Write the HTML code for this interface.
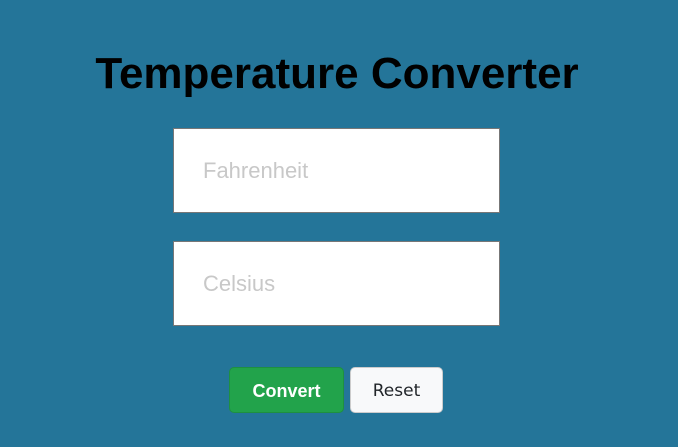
<!DOCTYPE html>
<html><head><style>
body{margin:0;width:678px;height:447px;background:#247599;font-family:"Liberation Sans",sans-serif;position:relative;overflow:hidden}
h1{position:absolute;left:-2px;width:678px;top:49px;margin:0;text-align:center;font-size:44px;font-weight:bold;color:#000;line-height:50px}
.in{position:absolute;left:173px;width:325px;height:83px;background:#fff;border:1px solid #777;box-sizing:content-box}
.in span{position:absolute;left:29px;top:29px;font-size:22px;color:#c8c8c8}
.b{position:absolute;top:367px;height:46px;border-radius:5px;font-size:18px;line-height:46px;text-align:center;box-sizing:border-box}
</style></head><body>
<h1>Temperature Converter</h1>
<div class="in" style="top:128px"><span>Fahrenheit</span></div>
<div class="in" style="top:241px"><span>Celsius</span></div>
<div class="b" style="left:229px;width:115px;background:#22a34b;border:1px solid #1e9040;color:#fff;font-weight:bold">Convert</div>
<div class="b" style="left:350px;width:93px;background:#f8f9fa;border:1px solid #ccc;color:#212529;font-family:'DejaVu Sans',sans-serif;font-size:17px">Reset</div>
</body></html>
